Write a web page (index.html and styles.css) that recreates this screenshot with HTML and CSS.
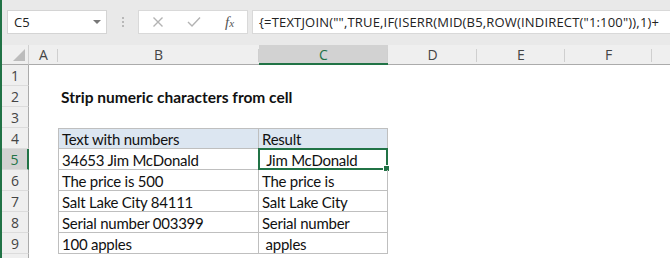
FILE: index.html
```html
<!DOCTYPE html>
<html>

<head>
    <title>Strip numeric characters</title>
    <link rel="stylesheet" href="styles.css">
</head>

<body>
    <div class="app">
        <div class="formula-bar">
            <div class="name-box">
                <span>C5</span>
                <span class="arrow"></span>
            </div>
            <div class="grip"><i></i><i></i><i></i></div>
            <div class="buttons">
                <svg class="icon" width="12" height="12" viewBox="0 0 12 12">
                    <path d="M1.5 1.5 L10.5 10.5 M10.5 1.5 L1.5 10.5" stroke="#b3b3b3" stroke-width="1.4" fill="none" />
                </svg>
                <svg class="icon" width="14" height="12" viewBox="0 0 14 12">
                    <path d="M1 6 L5 10 L13 1.5" stroke="#b3b3b3" stroke-width="1.4" fill="none" />
                </svg>
                <span class="fx">f<small>x</small></span>
            </div>
            <div class="formula">{=TEXTJOIN("",TRUE,IF(ISERR(MID(B5,ROW(INDIRECT("1:100")),1)+</div>
        </div>

        <div class="sheet">
            <div class="corner"><span></span></div>
            <div class="col-head">A</div>
            <div class="col-head">B</div>
            <div class="col-head active">C</div>
            <div class="col-head">D</div>
            <div class="col-head">E</div>
            <div class="col-head">F</div>
            <div class="col-head last"></div>

            <div class="row-head">1</div>
            <div class="cell"></div><div class="cell"></div><div class="cell"></div><div class="cell"></div><div class="cell"></div><div class="cell"></div><div class="cell"></div>

            <div class="row-head">2</div>
            <div class="cell"></div>
            <div class="cell title">Strip numeric characters from cell</div>
            <div class="cell"></div><div class="cell"></div><div class="cell"></div><div class="cell"></div><div class="cell"></div>

            <div class="row-head">3</div>
            <div class="cell"></div><div class="cell"></div><div class="cell"></div><div class="cell"></div><div class="cell"></div><div class="cell"></div><div class="cell"></div>

            <div class="row-head">4</div>
            <div class="cell"></div>
            <div class="cell tb tb-first tb-top head">Text with numbers</div>
            <div class="cell tb tb-top head">Result</div>
            <div class="cell"></div><div class="cell"></div><div class="cell"></div><div class="cell"></div>

            <div class="row-head active">5</div>
            <div class="cell"></div>
            <div class="cell tb tb-first">34653 Jim McDonald</div>
            <div class="cell tb selected">&nbsp;Jim McDonald<span class="handle"></span></div>
            <div class="cell"></div><div class="cell"></div><div class="cell"></div><div class="cell"></div>

            <div class="row-head">6</div>
            <div class="cell"></div>
            <div class="cell tb tb-first">The price is 500</div>
            <div class="cell tb">The price is</div>
            <div class="cell"></div><div class="cell"></div><div class="cell"></div><div class="cell"></div>

            <div class="row-head">7</div>
            <div class="cell"></div>
            <div class="cell tb tb-first">Salt Lake City 84111</div>
            <div class="cell tb">Salt Lake City</div>
            <div class="cell"></div><div class="cell"></div><div class="cell"></div><div class="cell"></div>

            <div class="row-head">8</div>
            <div class="cell"></div>
            <div class="cell tb tb-first">Serial number 003399</div>
            <div class="cell tb">Serial number</div>
            <div class="cell"></div><div class="cell"></div><div class="cell"></div><div class="cell"></div>

            <div class="row-head">9</div>
            <div class="cell"></div>
            <div class="cell tb tb-first">100 apples</div>
            <div class="cell tb">&nbsp;apples</div>
            <div class="cell"></div><div class="cell"></div><div class="cell"></div><div class="cell"></div>

            <div class="row-head"></div>
            <div class="cell"></div><div class="cell"></div><div class="cell"></div><div class="cell"></div><div class="cell"></div><div class="cell"></div><div class="cell"></div>
        </div>
    </div>
</body>

</html>
```

FILE: styles.css
```css
body {
    margin: 0;
    background-color: #fff;
    font-family: "Open Sans", sans-serif;
    overflow: hidden;
}

.app {
    width: 670px;
    height: 258px;
    border-left: 2px solid #217346;
    box-sizing: border-box;
    overflow: hidden;
}

.formula-bar {
    height: 45px;
    background-color: #e9e9e9;
    display: flex;
    align-items: flex-start;
    padding-top: 10px;
    padding-left: 5px;
    box-sizing: border-box;
}

.name-box {
    width: 100px;
    height: 24px;
    background-color: #fff;
    border: 1px solid #d4d4d4;
    box-sizing: border-box;
    display: flex;
    align-items: center;
    justify-content: space-between;
    padding: 0 5px 0 6px;
    font-size: 13px;
    color: #222;
}

.arrow {
    width: 0;
    height: 0;
    border-left: 4px solid transparent;
    border-right: 4px solid transparent;
    border-top: 4px solid #777;
}

.grip {
    width: 31px;
    height: 24px;
    display: flex;
    flex-direction: column;
    align-items: center;
    justify-content: center;
    gap: 2px;
}

.grip i {
    width: 2px;
    height: 2px;
    background-color: #b8b8b8;
}

.buttons {
    width: 110px;
    height: 24px;
    background-color: #fff;
    border: 1px solid #d9d9d9;
    box-sizing: border-box;
    display: flex;
    align-items: center;
    padding-left: 13px;
    gap: 23px;
}

.fx {
    font-family: "Liberation Serif", serif;
    font-style: italic;
    font-size: 15px;
    color: #555;
    margin-left: 1px;
}

.fx small {
    font-size: 11px;
}

.formula {
    flex: 1;
    height: 24px;
    margin-left: 4px;
    background-color: #fff;
    border: 1px solid #d9d9d9;
    border-right: none;
    box-sizing: border-box;
    font-size: 13px;
    letter-spacing: 0.18px;
    line-height: 22px;
    padding-left: 6px;
    color: #222;
    white-space: nowrap;
    overflow: hidden;
}

.sheet {
    display: grid;
    grid-template-columns: 27px 29px 201px 129px 89px 88px 87px 1fr;
    grid-template-rows: 20px repeat(10, 21px);
}

.corner,
.col-head,
.row-head {
    background-color: #efefef;
    color: #444;
    font-size: 14px;
    box-sizing: border-box;
}

.corner {
    border-bottom: 1px solid #ababab;
    border-right: 1px solid #d0d0d0;
    position: relative;
}

.corner span {
    position: absolute;
    right: 3px;
    bottom: 3px;
    width: 0;
    height: 0;
    border-left: 12px solid transparent;
    border-bottom: 12px solid #bcbcbc;
}

.col-head {
    text-align: center;
    line-height: 20px;
    border-bottom: 1px solid #ababab;
    position: relative;
}

.col-head::after {
    content: "";
    position: absolute;
    right: 0;
    top: 4px;
    bottom: 2px;
    width: 1px;
    background-color: #cfcfcf;
}

.col-head.last::after {
    display: none;
}

.col-head.active {
    background-color: #d2d2d2;
    border-bottom: 2px solid #217346;
    color: #217346;
}

.row-head {
    text-align: center;
    padding-top: 2px;
    line-height: 18px;
    border-right: 1px solid #ababab;
    border-bottom: 1px solid #dcdcdc;
}

.row-head.active {
    background-color: #d2d2d2;
    border-right: 2px solid #217346;
    color: #217346;
}

.cell {
    font-family: Lato, "Liberation Sans", sans-serif;
    font-size: 15px;
    letter-spacing: -0.25px;
    color: #111;
    padding-top: 2px;
    line-height: 19px;
    padding-left: 3px;
    white-space: nowrap;
    box-sizing: border-box;
    position: relative;
}

.title {
    font-weight: bold;
    font-size: 15.5px;
    letter-spacing: 0;
    overflow: visible;
}

.tb {
    border-right: 1px solid #bfbfbf;
    border-bottom: 1px solid #bfbfbf;
    line-height: 18px;
}

.tb-first {
    border-left: 1px solid #bfbfbf;
}

.tb-top {
    border-top: 1px solid #bfbfbf;
    padding-top: 1px;
}

.head {
    background-color: #dce6f1;
}

.selected {
    border: 2px solid #217346;
    margin-top: -1px;
    margin-left: -1px;
    padding-top: 1px;
    line-height: 18px;
    padding-left: 3px;
}

.handle {
    position: absolute;
    right: -4px;
    bottom: -4px;
    width: 5px;
    height: 5px;
    background-color: #217346;
    border: 1px solid #fff;
}
```
